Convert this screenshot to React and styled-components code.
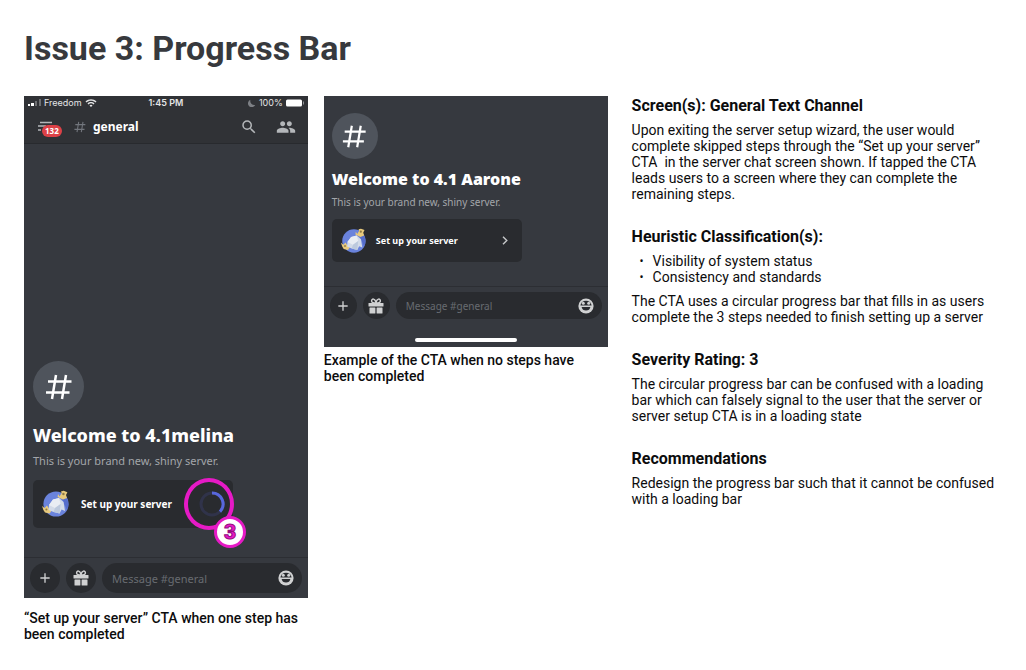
import styled, { createGlobalStyle } from "styled-components";
import { MdSearch, MdPeople, MdAdd, MdWifi } from "react-icons/md";

const GlobalStyles = createGlobalStyle`
  * {
    box-sizing: border-box;
    margin: 0;
    padding: 0;
  }

  body {
    background-color: #fff;
    color: #0c0c0d;
    font-family: Roboto, sans-serif;
    font-size: 14px;
    line-height: 16px;
  }

  button {
    border: none;
    font-family: inherit;
    cursor: pointer;
  }

  svg {
    display: block;
    flex-shrink: 0;
  }
`;

const notes = [
  {
    title: 'Screen(s): General Text Channel',
    text: 'Upon exiting the server setup wizard, the user would complete skipped steps through the “Set up your server” CTA\u00a0 in the server chat screen shown. If tapped the CTA leads users to a screen where they can complete the remaining steps.',
  },
  {
    title: 'Heuristic Classification(s):',
    list: ['Visibility of system status', 'Consistency and standards'],
    text: 'The CTA uses a circular progress bar that fills in as users complete the 3 steps needed to finish setting up a server',
  },
  {
    title: 'Severity Rating: 3',
    text: 'The circular progress bar can be confused with a loading bar which can falsely signal to the user that the server or server setup CTA is in a loading state',
  },
  {
    title: 'Recommendations',
    text: 'Redesign the progress bar such that it cannot be confused with a loading bar',
  },
];

function HashIcon({ size, width = 2.5 }) {
  return (
    <svg width={size} height={size} viewBox="0 0 28 28" fill="none" stroke="currentColor" strokeWidth={width}>
      <path d="M11 2L7 26M21 2L17 26M3 8.5H26.5M1 19.5H24.5" />
    </svg>
  );
}

function SignalIcon() {
  return (
    <svg width="13" height="8" viewBox="0 0 13 8" fill="#fff">
      <rect x="0" y="5" width="2" height="2" />
      <rect x="3" y="4" width="3" height="3" />
      <rect x="7" y="2" width="2" height="5" opacity="0.3" />
      <rect x="11" y="0" width="2" height="7" opacity="0.3" />
    </svg>
  );
}

function MoonIcon() {
  return (
    <svg width="8" height="8" viewBox="0 0 8 8" fill="#7d8085">
      <path d="M2.4 0.8A3.8 3.8 0 1 0 7.2 6A4.2 4.2 0 0 1 2.4 0.8Z" />
    </svg>
  );
}

function BatteryIcon() {
  return (
    <svg width="18" height="8" viewBox="0 0 18 8">
      <rect x="0" y="0.5" width="16" height="7" rx="1.5" fill="#fff" />
      <rect x="17" y="2.5" width="1" height="3" fill="#8e9196" />
    </svg>
  );
}

function MenuIcon() {
  return (
    <svg width="16" height="12" viewBox="0 0 16 12" stroke="#b4b7ba" strokeWidth="1.4">
      <path d="M4 1.5H16M2 5H10M2 9H5" />
    </svg>
  );
}

function GiftIcon() {
  return (
    <svg width="16" height="16" viewBox="0 0 16 16" fill="#d0d1d2">
      <rect x="0.5" y="5" width="15" height="3.6" rx="0.6" />
      <rect x="1.5" y="9.6" width="5.9" height="6" rx="0.5" />
      <rect x="8.6" y="9.6" width="5.9" height="6" rx="0.5" />
      <path
        d="M8 5C6 5 3.6 4.8 3.6 2.9C3.6 0.2 7.2 0.2 8 4.6C8.8 0.2 12.4 0.2 12.4 2.9C12.4 4.8 10 5 8 5Z"
        fill="none" stroke="#d0d1d2" strokeWidth="1.4"
      />
    </svg>
  );
}

// the face is a light disc, the cheeks and the mouth are cut out of it
function SmileIcon() {
  return (
    <svg width="16" height="16" viewBox="0 0 16 16">
      <circle cx="8" cy="8" r="7.6" fill="#d0d1d2" />
      <path d="M2.4 7.4A5.7 5.7 0 0 1 13.6 7.4Z" fill="#292b2f" />
      <circle cx="5.3" cy="5.3" r="1.5" fill="#d0d1d2" />
      <circle cx="10.7" cy="5.3" r="1.5" fill="#d0d1d2" />
      <path d="M3.6 9H12.4A4.5 4.5 0 0 1 3.6 9Z" fill="#292b2f" />
    </svg>
  );
}

function ServerIcon({ size }) {
  return (
    <svg width={size} height={size} viewBox="0 0 28 28">
      <circle cx="15" cy="14" r="12.6" fill="#6a83dc" />
      <path d="M20 3A12.6 12.6 0 0 1 26 20L21 9Z" fill="#556dcb" />
      <path d="M1 16L3.6 18L6 15.6L8 18.8L11 20L8.6 23.6L4 22.6L2.4 20Z" fill="#e8ca7c" />
      <path d="M17 4L18.6 6.4L20.6 3L20 1.4L22.6 0.8L26.4 2.2L25 5L26 8L22 9.6L16.6 7Z" fill="#e8ca7c" />
      <circle cx="22.4" cy="4" r="1.2" fill="#8e7a48" />
      <circle cx="5.4" cy="19.4" r="1" fill="#8e7a48" />
      <path d="M8 15L12 9.6L18 8L22.6 12L24 21L20.6 19.6L18.6 23.6L12.6 22L7.6 20Z" fill="#d3dbe8" />
      <path d="M12 9.6L18 8L19.6 14L14 18L8 15Z" fill="#e9edf3" />
      <path d="M14 18L19.6 14L18.6 23.6L12.6 22Z" fill="#bcc9dd" />
    </svg>
  );
}

function Progress() {
  return (
    <svg width="26" height="26" viewBox="0 0 26 26" fill="none" strokeWidth="3">
      <circle cx="13" cy="13" r="11" stroke="#30334a" />
      <path d="M13 2A11 11 0 0 1 21 20.6" stroke="#5867dd" />
    </svg>
  );
}

function Chevron() {
  return (
    <svg width="6" height="9" viewBox="0 0 6 9" fill="none" stroke="#c6c8ca" strokeWidth="1.4">
      <path d="M1 0.8L4.8 4.5L1 8.2" />
    </svg>
  );
}

function MessageBar({ size, id }) {
  return (
    <Composer>
      <RoundButton $size={size} aria-label="Add attachment"><MdAdd size="16px" /></RoundButton>
      <RoundButton $size={size} aria-label="Send a gift"><GiftIcon /></RoundButton>
      <Field $size={size}>
        <input id={id} type="text" placeholder="Message #general" aria-label="Message #general" />
        <IconButton aria-label="Pick an emoji"><SmileIcon /></IconButton>
      </Field>
    </Composer>
  );
}

export default function App() {
  return (
    <>
      <GlobalStyles />
      <Page>
        <Title>Issue 3: Progress Bar</Title>
        <Columns>
          <figure>
            <Phone>
              <StatusBar>
                <span><SignalIcon /> Freedom <MdWifi size="12px" /></span>
                <strong>1:45 PM</strong>
                <span><MoonIcon /> 100% <BatteryIcon /></span>
              </StatusBar>
              <Header>
                <MenuButton aria-label="Open menu">
                  <MenuIcon />
                  <Unread>132</Unread>
                </MenuButton>
                <Channel><HashIcon size={12} /> <b>general</b></Channel>
                <IconButton aria-label="Search"><MdSearch size="18px" /></IconButton>
                <IconButton aria-label="Members"><MdPeople size="20px" /></IconButton>
              </Header>
              <Chat $tall>
                <Avatar $size={51}><HashIcon size={28} /></Avatar>
                <Welcome $tall>Welcome to 4.1melina</Welcome>
                <Tagline $tall>This is your brand new, shiny server.</Tagline>
                <Setup $tall>
                  <ServerIcon size={28} />
                  <span>Set up your server</span>
                  <Progress />
                  <Ring />
                  <Marker>3</Marker>
                </Setup>
              </Chat>
              <MessageBar size={30} id="message-progress" />
            </Phone>
            <Caption $gap={12}>“Set up your server” CTA when one step has been completed</Caption>
          </figure>
          <figure>
            <Phone>
              <Chat>
                <Avatar $size={46}><HashIcon size={25} /></Avatar>
                <Welcome>Welcome to 4.1 Aarone</Welcome>
                <Tagline>This is your brand new, shiny server.</Tagline>
                <Setup>
                  <ServerIcon size={26} />
                  <span>Set up your server</span>
                  <Chevron />
                </Setup>
              </Chat>
              <MessageBar size={27} id="message-empty" />
              <HomeBar />
            </Phone>
            <Caption $gap={5}>Example of the CTA when no steps have been completed</Caption>
          </figure>
          <Notes>
            {notes.map((note) => (
              <section key={note.title}>
                <h2>{note.title}</h2>
                {note.list && <ul>{note.list.map((item) => <li key={item}>{item}</li>)}</ul>}
                <p>{note.text}</p>
              </section>
            ))}
          </Notes>
        </Columns>
      </Page>
    </>
  );
}

const Page = styled.main`
  padding: 28px 24px;
`;

const Title = styled.h1`
  font-size: 34px;
  line-height: 40px;
  font-weight: 700;
  color: #37393d;
  margin-bottom: 28px;
`;

const Columns = styled.div`
  display: grid;
  grid-template-columns: 3fr 3fr 4fr;
  column-gap: 16px;
  align-items: start;
`;

const Phone = styled.div`
  display: flex;
  flex-direction: column;
  background-color: #36393f;
  color: #fff;
  font-family: "Noto Sans", sans-serif;
`;

const StatusBar = styled.div`
  display: grid;
  grid-template-columns: 1fr auto 1fr;
  align-items: center;
  height: 14px;
  padding: 0 4px;
  background-color: #303236;
  color: #e4e5e6;
  font-family: Inter, sans-serif;
  font-size: 9px;
  line-height: 14px;

  span{
    display: flex;
    align-items: center;
    gap: 3px;
  }

  span:last-child{
    justify-content: flex-end;
  }

  strong{
    font-weight: 600;
  }
`;

const Header = styled.div`
  display: flex;
  align-items: center;
  gap: 18px;
  height: 34px;
  padding: 0 12px;
  background-color: #303236;
  border-bottom: 1px solid #282a2e;
`;

const IconButton = styled.button`
  display: flex;
  background: none;
  color: #b4b7ba;
`;

const MenuButton = styled(IconButton)`
  position: relative;
  width: 20px;
`;

const Unread = styled.span`
  position: absolute;
  top: 4px;
  left: 6px;
  padding: 0 3px;
  border-radius: 6px;
  background-color: #dc4147;
  color: #fff;
  font-size: 8px;
  line-height: 12px;
  font-weight: 700;
`;

const Channel = styled.div`
  display: flex;
  flex: 1;
  align-items: center;
  gap: 7px;
  color: #72767d;

  b{
    color: #fff;
    font-size: 12px;
    font-weight: 700;
  }
`;

const Chat = styled.div`
  display: flex;
  flex-direction: column;
  align-items: flex-start;
  justify-content: flex-end;
  min-height: ${({ $tall }) => $tall ? '413px' : '190px'};
  padding: ${({ $tall }) => $tall ? '0 9px 29px' : '0 8px 24px'};
`;

const Avatar = styled.div`
  display: flex;
  align-items: center;
  justify-content: center;
  width: ${({ $size }) => $size}px;
  height: ${({ $size }) => $size}px;
  border-radius: 50%;
  background-color: #4f545c;
`;

const Welcome = styled.h3`
  margin-top: ${({ $tall }) => $tall ? '11px' : '8px'};
  font-size: ${({ $tall }) => $tall ? '18px' : '16px'};
  line-height: 24px;
  font-weight: ${({ $tall }) => $tall ? '800' : '900'};
`;

const Tagline = styled.p`
  margin-top: ${({ $tall }) => $tall ? '6px' : '3px'};
  color: #a3a6aa;
  font-size: ${({ $tall }) => $tall ? '11px' : '10px'};
  line-height: 16px;
`;

const Setup = styled.button`
  position: relative;
  display: flex;
  align-items: center;
  gap: ${({ $tall }) => $tall ? '12px' : '10px'};
  width: ${({ $tall }) => $tall ? '200px' : '190px'};
  height: ${({ $tall }) => $tall ? '48px' : '43px'};
  margin-top: ${({ $tall }) => $tall ? '11px' : '9px'};
  padding: 0 ${({ $tall }) => $tall ? '8px' : '14px'} 0 8px;
  border-radius: 5px;
  background-color: #292b2f;
  color: #fff;
  font-size: ${({ $tall }) => $tall ? '10px' : '9px'};
  font-weight: 700;
  text-align: left;

  span:first-of-type{
    flex: 1;
  }
`;

const Ring = styled.i`
  position: absolute;
  top: -2px;
  right: -1px;
  width: 50px;
  height: 52px;
  border: 4px solid #e61ac6;
  border-radius: 50%;
`;

const Marker = styled.em`
  position: absolute;
  top: 36px;
  right: -13px;
  width: 32px;
  height: 32px;
  border: 3px solid #e61ac6;
  border-radius: 50%;
  background-color: #fff;
  color: #e61ac6;
  font-family: Roboto, sans-serif;
  font-size: 21px;
  font-style: normal;
  font-weight: 900;
  line-height: 26px;
  text-align: center;
  -webkit-text-stroke: 1px #96107f;
`;

const Composer = styled.div`
  display: flex;
  align-items: center;
  gap: 6px;
  padding: 5px 6px;
  border-top: 1px solid #2c2e33;
`;

const RoundButton = styled.button`
  display: flex;
  align-items: center;
  justify-content: center;
  flex-shrink: 0;
  width: ${({ $size }) => $size}px;
  height: ${({ $size }) => $size}px;
  border-radius: 50%;
  background-color: #292b2f;
  color: #d0d1d2;
`;

const Field = styled.div`
  display: flex;
  flex: 1;
  align-items: center;
  min-width: 0;
  height: ${({ $size }) => $size}px;
  padding: 0 8px 0 10px;
  border-radius: 15px;
  background-color: #292b2f;

  input{
    flex: 1;
    min-width: 0;
    border: none;
    outline: none;
    background: none;
    color: #fff;
    font-family: inherit;
    font-size: ${({ $size }) => $size === 30 ? '11px' : '10px'};
  }

  input::placeholder{
    color: #686b71;
  }
`;

const HomeBar = styled.div`
  align-self: center;
  width: 102px;
  height: 4px;
  margin: 14px 0 5px;
  border-radius: 2px;
  background-color: #fff;
`;

const Caption = styled.figcaption`
  margin-top: ${({ $gap }) => $gap}px;
  font-weight: 500;
`;

const Notes = styled.div`
  display: flex;
  flex-direction: column;
  gap: 25px;
  padding-left: 8px;

  h2{
    margin-bottom: 6px;
    font-size: 16px;
    line-height: 20px;
    font-weight: 700;
  }

  ul{
    margin-bottom: 8px;
    list-style: none;
  }

  li{
    display: flex;
    padding-left: 8px;
  }

  li::before{
    content: '•';
    width: 13px;
    font-size: 12px;
  }
`;
